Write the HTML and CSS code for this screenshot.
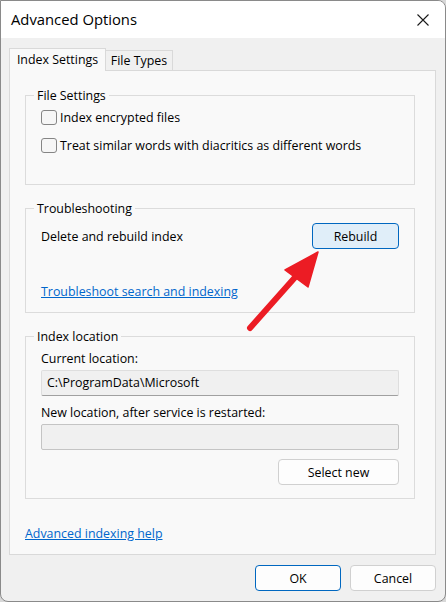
FILE: index.html
```html
<!DOCTYPE html>
<html>
<head>
<meta charset="utf-8">
<link rel="stylesheet" href="styles.css">
</head>
<body>
<div class="window">
  <div class="titlebar">
    <span class="title">Advanced Options</span>
    <svg class="close" width="12" height="12" viewBox="0 0 12 12"><path d="M0.5 0.5 L11.5 11.5 M11.5 0.5 L0.5 11.5" stroke="#1a1a1a" stroke-width="1.1" fill="none"/></svg>
  </div>
  <div class="body">
    <div class="tabs">
      <div class="tab active">Index Settings</div>
      <div class="tab">File Types</div>
    </div>
    <div class="panel">
      <div class="group g1">
        <div class="gtitle">File Settings</div>
        <div class="checks">
          <label class="check"><span class="box"></span><span>Index encrypted files</span></label>
          <label class="check"><span class="box"></span><span>Treat similar words with diacritics as different words</span></label>
        </div>
      </div>
      <div class="group g2">
        <div class="gtitle">Troubleshooting</div>
        <div class="row">
          <span>Delete and rebuild index</span>
          <button class="btn rebuild">Rebuild</button>
        </div>
        <a class="link trouble" href="#">Troubleshoot search and indexing</a>
      </div>
      <div class="group g3">
        <div class="gtitle">Index location</div>
        <div class="lbl first">Current location:</div>
        <div class="field ro">C:\ProgramData\Microsoft</div>
        <div class="lbl">New location, after service is restarted:</div>
        <div class="field empty"></div>
        <div class="btnrow"><button class="btn select">Select new</button></div>
      </div>
      <a class="link help" href="#">Advanced indexing help</a>
    </div>
    <div class="footer">
      <button class="btn primary-ok">OK</button>
      <button class="btn">Cancel</button>
    </div>
  </div>
  <svg class="arrow" width="446" height="602" viewBox="0 0 446 602">
    <line x1="250" y1="328" x2="298" y2="274" stroke="#ec1c24" stroke-width="6" stroke-linecap="round"/>
    <polygon points="318,252 285,270 308,287" fill="#ec1c24" stroke="#ec1c24" stroke-width="1.5" stroke-linejoin="round"/>
  </svg>
</div>
</body>
</html>
```
FILE: styles.css
```css
* { box-sizing: border-box; }
html, body { margin: 0; padding: 0; }
body {
  background: #d8d8d8;
  font-family: "Open Sans", "Noto Sans", sans-serif;
  font-size: 12.4px;
  color: #000;
}
.window {
  position: relative;
  width: 446px;
  height: 602px;
  background: #f0f0f0;
  border: 1px solid #8a8a8a;
  border-radius: 0 8px 8px 8px;
  overflow: hidden;
}
.titlebar {
  height: 37px;
  background: #fff;
  display: flex;
  align-items: center;
  justify-content: space-between;
  padding: 0 16px 2px 10px;
}
.title {
  font-size: 14.8px;
  color: #000;
}
.close { display: block; margin-top: 2px; }
.body {
  padding: 10px 8px 0 8px;
  display: flex;
  flex-direction: column;
}
.tabs {
  display: flex;
  align-items: flex-end;
  height: 22px;
}
.tab {
  border: 1px solid #d9d9d9;
  border-bottom: none;
  background: #f0f0f0;
  height: 20px;
  line-height: 19px;
  padding: 0 2px;
  margin-left: -1px;
  width: 68px;
  text-align: center;
  white-space: nowrap;
}
.tab.active {
  margin-left: 0;
  width: 97px;
  height: 23px;
  line-height: 21px;
  margin-bottom: -1px;
  background: #f9f9f9;
  position: relative;
  z-index: 1;
}
.panel {
  width: 427px;
  height: 485px;
  background: #f9f9f9;
  border: 1px solid #d9d9d9;
  padding: 24px 20px 0 15px;
  display: flex;
  flex-direction: column;
}
.group {
  border: 1px solid #dcdcdc;
  padding: 0 15px;
  display: flex;
  flex-direction: column;
}
.gtitle {
  margin-top: -8px;
  margin-left: -7px;
  padding: 0 3px;
  line-height: 15px;
  height: 15px;
  background: #f9f9f9;
  align-self: flex-start;
}
.g1 { height: 90px; }
.g2 { height: 105px; margin-top: 23px; }
.g3 { height: 163px; margin-top: 23px; }
.checks {
  margin-top: 7px;
  display: flex;
  flex-direction: column;
  gap: 13px;
}
.check {
  display: flex;
  align-items: center;
  height: 15px;
  line-height: 15px;
  gap: 3px;
  white-space: nowrap;
}
.box {
  width: 16px;
  height: 15px;
  border: 1px solid #858585;
  border-radius: 3px;
  background: #f6f6f6;
  flex: none;
}
.row {
  margin-top: 7px;
  display: flex;
  align-items: center;
  justify-content: space-between;
  height: 26px;
}
.btn {
  font-family: inherit;
  font-size: 12.4px;
  color: #000;
  background: #fdfdfd;
  border: 1px solid #d0d0d0;
  border-radius: 4px;
  height: 26px;
  padding: 0;
  margin: 0;
}
.rebuild {
  width: 87px;
  background: #e0eef9;
  border-color: #0067c0;
}
.link {
  color: #0066cc;
  text-decoration: underline;
  line-height: 15px;
  align-self: flex-start;
}
.trouble { margin-top: 35px; }
.lbl { line-height: 15px; height: 15px; margin-top: 9px; }
.lbl.first { margin-top: 7px; }
.field {
  margin-top: 4px;
  height: 26px;
  background: #f0f0f0;
  border: 1px solid #dedede;
  border-radius: 2px;
  padding: 0 5px;
  line-height: 23px;
}
.field.ro { border-bottom-color: #a0a0a0; }
.field.empty { border-color: #c4c4c4; }
.btnrow {
  margin-top: 9px;
  display: flex;
  justify-content: flex-end;
}
.select { width: 121px; }
.help { margin-top: 27px; }
.footer {
  margin-top: 10px;
  display: flex;
  justify-content: flex-end;
  gap: 9px;
  padding-right: 1px;
}
.footer .btn { width: 86px; height: 26px; }
.primary-ok { border-color: #0067c0; }
.arrow {
  position: absolute;
  left: -1px;
  top: -1px;
  pointer-events: none;
}
```
